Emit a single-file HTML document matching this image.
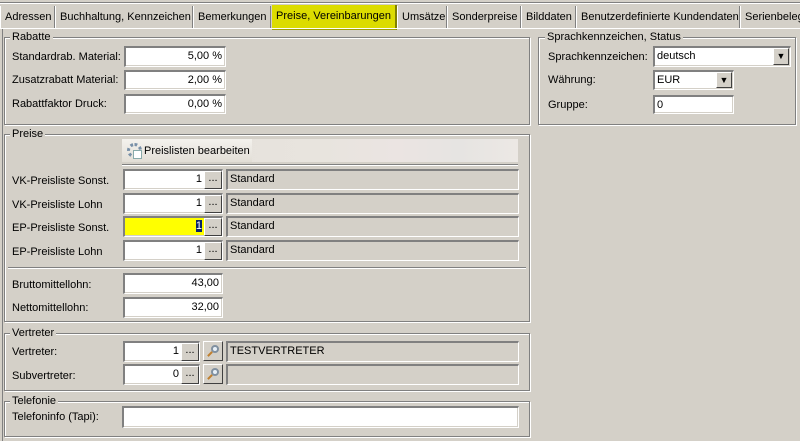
<!DOCTYPE html><html><head><style>
body{margin:0;width:800px;height:441px;background:#d4d0c8;font-family:"Liberation Sans",sans-serif;font-size:11px;color:#000;position:relative;overflow:hidden}
div,span{position:absolute;box-sizing:border-box}
.t{white-space:nowrap}
.grp{border:1px solid #808080;box-shadow:inset 1px 1px 0 #fff,1px 1px 0 #fff}
.gl{background:#d4d0c8;padding:0 2px;white-space:nowrap;line-height:13px}
.in{background:#fff;border-top:2px solid #808080;border-left:2px solid #808080;border-right:1px solid #fff;border-bottom:1px solid #fff;box-shadow:inset -1px -1px 0 #d4d0c8;line-height:16px;padding:0 3px;white-space:nowrap}
.r{text-align:right}
.st{background:#d4d0c8;border-top:2px solid #808080;border-left:2px solid #808080;border-right:1px solid #fff;border-bottom:1px solid #fff;line-height:16px;padding:0 2px;white-space:nowrap}
.btn{background:#d4d0c8;border-top:1px solid #fff;border-left:1px solid #fff;border-right:1px solid #404040;border-bottom:1px solid #404040;text-align:center;line-height:12px;font-size:11px}
.tab{top:6px;height:22px;line-height:22px;border-right:1px solid #808080;border-left:1px solid #fff;padding:0 4px;white-space:nowrap;overflow:hidden}
</style></head><body>
<div style="left:0;top:2px;width:800px;height:1px;background:#808080"></div>
<div style="left:0;top:3px;width:800px;height:1px;background:#fff"></div>
<div class="tab" style="left:0;width:55px">Adressen</div>
<div class="tab" style="left:55px;width:138px">Buchhaltung, Kennzeichen</div>
<div class="tab" style="left:193px;width:78px">Bemerkungen</div>
<div style="left:272px;top:5px;width:125px;height:25px;background:#dcdc00;border-right:2px solid #808000;border-bottom:2px solid #a0a000;text-align:center;line-height:22px" class="t">Preise, Vereinbarungen</div>
<div class="tab" style="left:397px;width:50px">Umsätze</div>
<div class="tab" style="left:447px;width:74px">Sonderpreise</div>
<div class="tab" style="left:521px;width:55px">Bilddaten</div>
<div class="tab" style="left:576px;width:164px">Benutzerdefinierte Kundendaten</div>
<div class="tab" style="left:740px;width:70px">Serienbeleg</div>
<div style="left:0;top:28px;width:800px;height:1px;background:#fff"></div>
<div style="left:2px;top:29px;width:1px;height:412px;background:#808080"></div>

<!-- Rabatte -->
<div class="grp" style="left:4px;top:37px;width:526px;height:88px"></div>
<div class="gl" style="left:10px;top:31px">Rabatte</div>
<div class="t" style="left:12px;top:51px">Standardrab. Material:</div>
<div class="t" style="left:12px;top:74px">Zusatzrabatt Material:</div>
<div class="t" style="left:12px;top:98px">Rabattfaktor Druck:</div>
<div class="in r" style="left:124px;top:46px;width:102px;height:21px">5,00 %</div>
<div class="in r" style="left:124px;top:70px;width:102px;height:20px">2,00 %</div>
<div class="in r" style="left:124px;top:94px;width:102px;height:20px">0,00 %</div>

<!-- Sprach -->
<div class="grp" style="left:538px;top:37px;width:258px;height:88px"></div>
<div class="gl" style="left:545px;top:31px">Sprachkennzeichen, Status</div>
<div class="t" style="left:548px;top:51px">Sprachkennzeichen:</div>
<div class="t" style="left:548px;top:74px">Währung:</div>
<div class="t" style="left:548px;top:99px">Gruppe:</div>
<div class="in" style="left:653px;top:46px;width:138px;height:21px;padding-left:2px">deutsch</div>
<div class="btn" style="left:773px;top:48px;width:16px;height:17px;font-size:9px;line-height:15px">▼</div>
<div class="in" style="left:653px;top:70px;width:81px;height:20px;padding-left:2px">EUR</div>
<div class="btn" style="left:716px;top:72px;width:16px;height:16px;font-size:9px;line-height:14px">▼</div>
<div class="in" style="left:653px;top:95px;width:81px;height:19px;padding-left:2px">0</div>

<!-- Preise -->
<div class="grp" style="left:4px;top:134px;width:526px;height:188px"></div>
<div class="gl" style="left:10px;top:128px">Preise</div>
<div style="left:122px;top:139px;width:396px;height:23px;background:linear-gradient(90deg,#e4e0da 0%,#e8e4de 50%,#ebe4e2 70%,#e6e4e2 85%,#ece8e4 100%)"></div>
<div style="left:122px;top:139px;width:130px;height:23px;background:linear-gradient(#f4f2ee,#e2ded6)"></div>
<div style="left:127px;top:143px;width:15px;height:15px;border-radius:50%;border:3px dotted #7890a8"></div>
<div style="left:133px;top:150px;width:9px;height:9px;background:#fff;border:1px solid #8aa"></div>
<div class="t" style="left:144px;top:145px;color:#000">Preislisten bearbeiten</div>
<div style="left:122px;top:164px;width:396px;height:1px;background:#808080"></div>
<div style="left:122px;top:165px;width:396px;height:1px;background:#fff"></div>
<div class="t" style="left:12px;top:175px">VK-Preisliste Sonst.</div>
<div class="t" style="left:12px;top:199px">VK-Preisliste Lohn</div>
<div class="t" style="left:12px;top:222px">EP-Preisliste Sonst.</div>
<div class="t" style="left:12px;top:246px">EP-Preisliste Lohn</div>
<div class="in r" style="left:123px;top:169px;width:100px;height:21px;padding-right:20px">1</div>
<div class="in r" style="left:123px;top:193px;width:100px;height:21px;padding-right:20px">1</div>
<div class="in r" style="left:123px;top:216px;width:100px;height:21px;padding-right:20px;background:#ffff00"><span style="position:static;background:#0a246a;color:#fff">1</span></div>
<div class="in r" style="left:123px;top:240px;width:100px;height:21px;padding-right:20px">1</div>
<div class="btn" style="left:204px;top:171px;width:18px;height:18px">...</div>
<div class="btn" style="left:204px;top:195px;width:18px;height:18px">...</div>
<div class="btn" style="left:204px;top:218px;width:18px;height:18px">...</div>
<div class="btn" style="left:204px;top:242px;width:18px;height:18px">...</div>
<div class="st" style="left:226px;top:169px;width:293px;height:21px">Standard</div>
<div class="st" style="left:226px;top:193px;width:293px;height:21px">Standard</div>
<div class="st" style="left:226px;top:216px;width:293px;height:21px">Standard</div>
<div class="st" style="left:226px;top:240px;width:293px;height:21px">Standard</div>
<div style="left:8px;top:267px;width:518px;height:1px;background:#808080"></div>
<div style="left:8px;top:268px;width:518px;height:1px;background:#fff"></div>
<div class="t" style="left:12px;top:279px">Bruttomittellohn:</div>
<div class="t" style="left:12px;top:302px">Nettomittellohn:</div>
<div class="in r" style="left:123px;top:273px;width:100px;height:21px">43,00</div>
<div class="in r" style="left:123px;top:297px;width:100px;height:21px">32,00</div>

<!-- Vertreter -->
<div class="grp" style="left:4px;top:333px;width:526px;height:58px"></div>
<div class="gl" style="left:10px;top:327px">Vertreter</div>
<div class="t" style="left:12px;top:346px">Vertreter:</div>
<div class="t" style="left:12px;top:370px">Subvertreter:</div>
<div class="in r" style="left:123px;top:341px;width:77px;height:21px;padding-right:20px">1</div>
<div class="in r" style="left:123px;top:364px;width:77px;height:21px;padding-right:20px">0</div>
<div class="btn" style="left:181px;top:343px;width:18px;height:18px">...</div>
<div class="btn" style="left:181px;top:366px;width:18px;height:18px">...</div>
<div class="btn" style="left:203px;top:341px;width:20px;height:20px"><div style="left:7px;top:3px;width:8px;height:8px;border:2px solid #8090a0;border-radius:50%;background:#e8f0f8"></div><div style="left:3px;top:11px;width:6px;height:2px;background:#c08030;transform:rotate(-45deg)"></div></div>
<div class="btn" style="left:203px;top:364px;width:20px;height:20px"><div style="left:7px;top:3px;width:8px;height:8px;border:2px solid #8090a0;border-radius:50%;background:#e8f0f8"></div><div style="left:3px;top:11px;width:6px;height:2px;background:#c08030;transform:rotate(-45deg)"></div></div>
<div class="st" style="left:226px;top:341px;width:293px;height:21px">TESTVERTRETER</div>
<div class="st" style="left:226px;top:364px;width:293px;height:21px"></div>

<!-- Telefonie -->
<div class="grp" style="left:4px;top:401px;width:526px;height:36px"></div>
<div class="gl" style="left:10px;top:395px">Telefonie</div>
<div class="t" style="left:12px;top:411px">Telefoninfo (Tapi):</div>
<div class="in" style="left:122px;top:406px;width:397px;height:22px"></div>
</body></html>
